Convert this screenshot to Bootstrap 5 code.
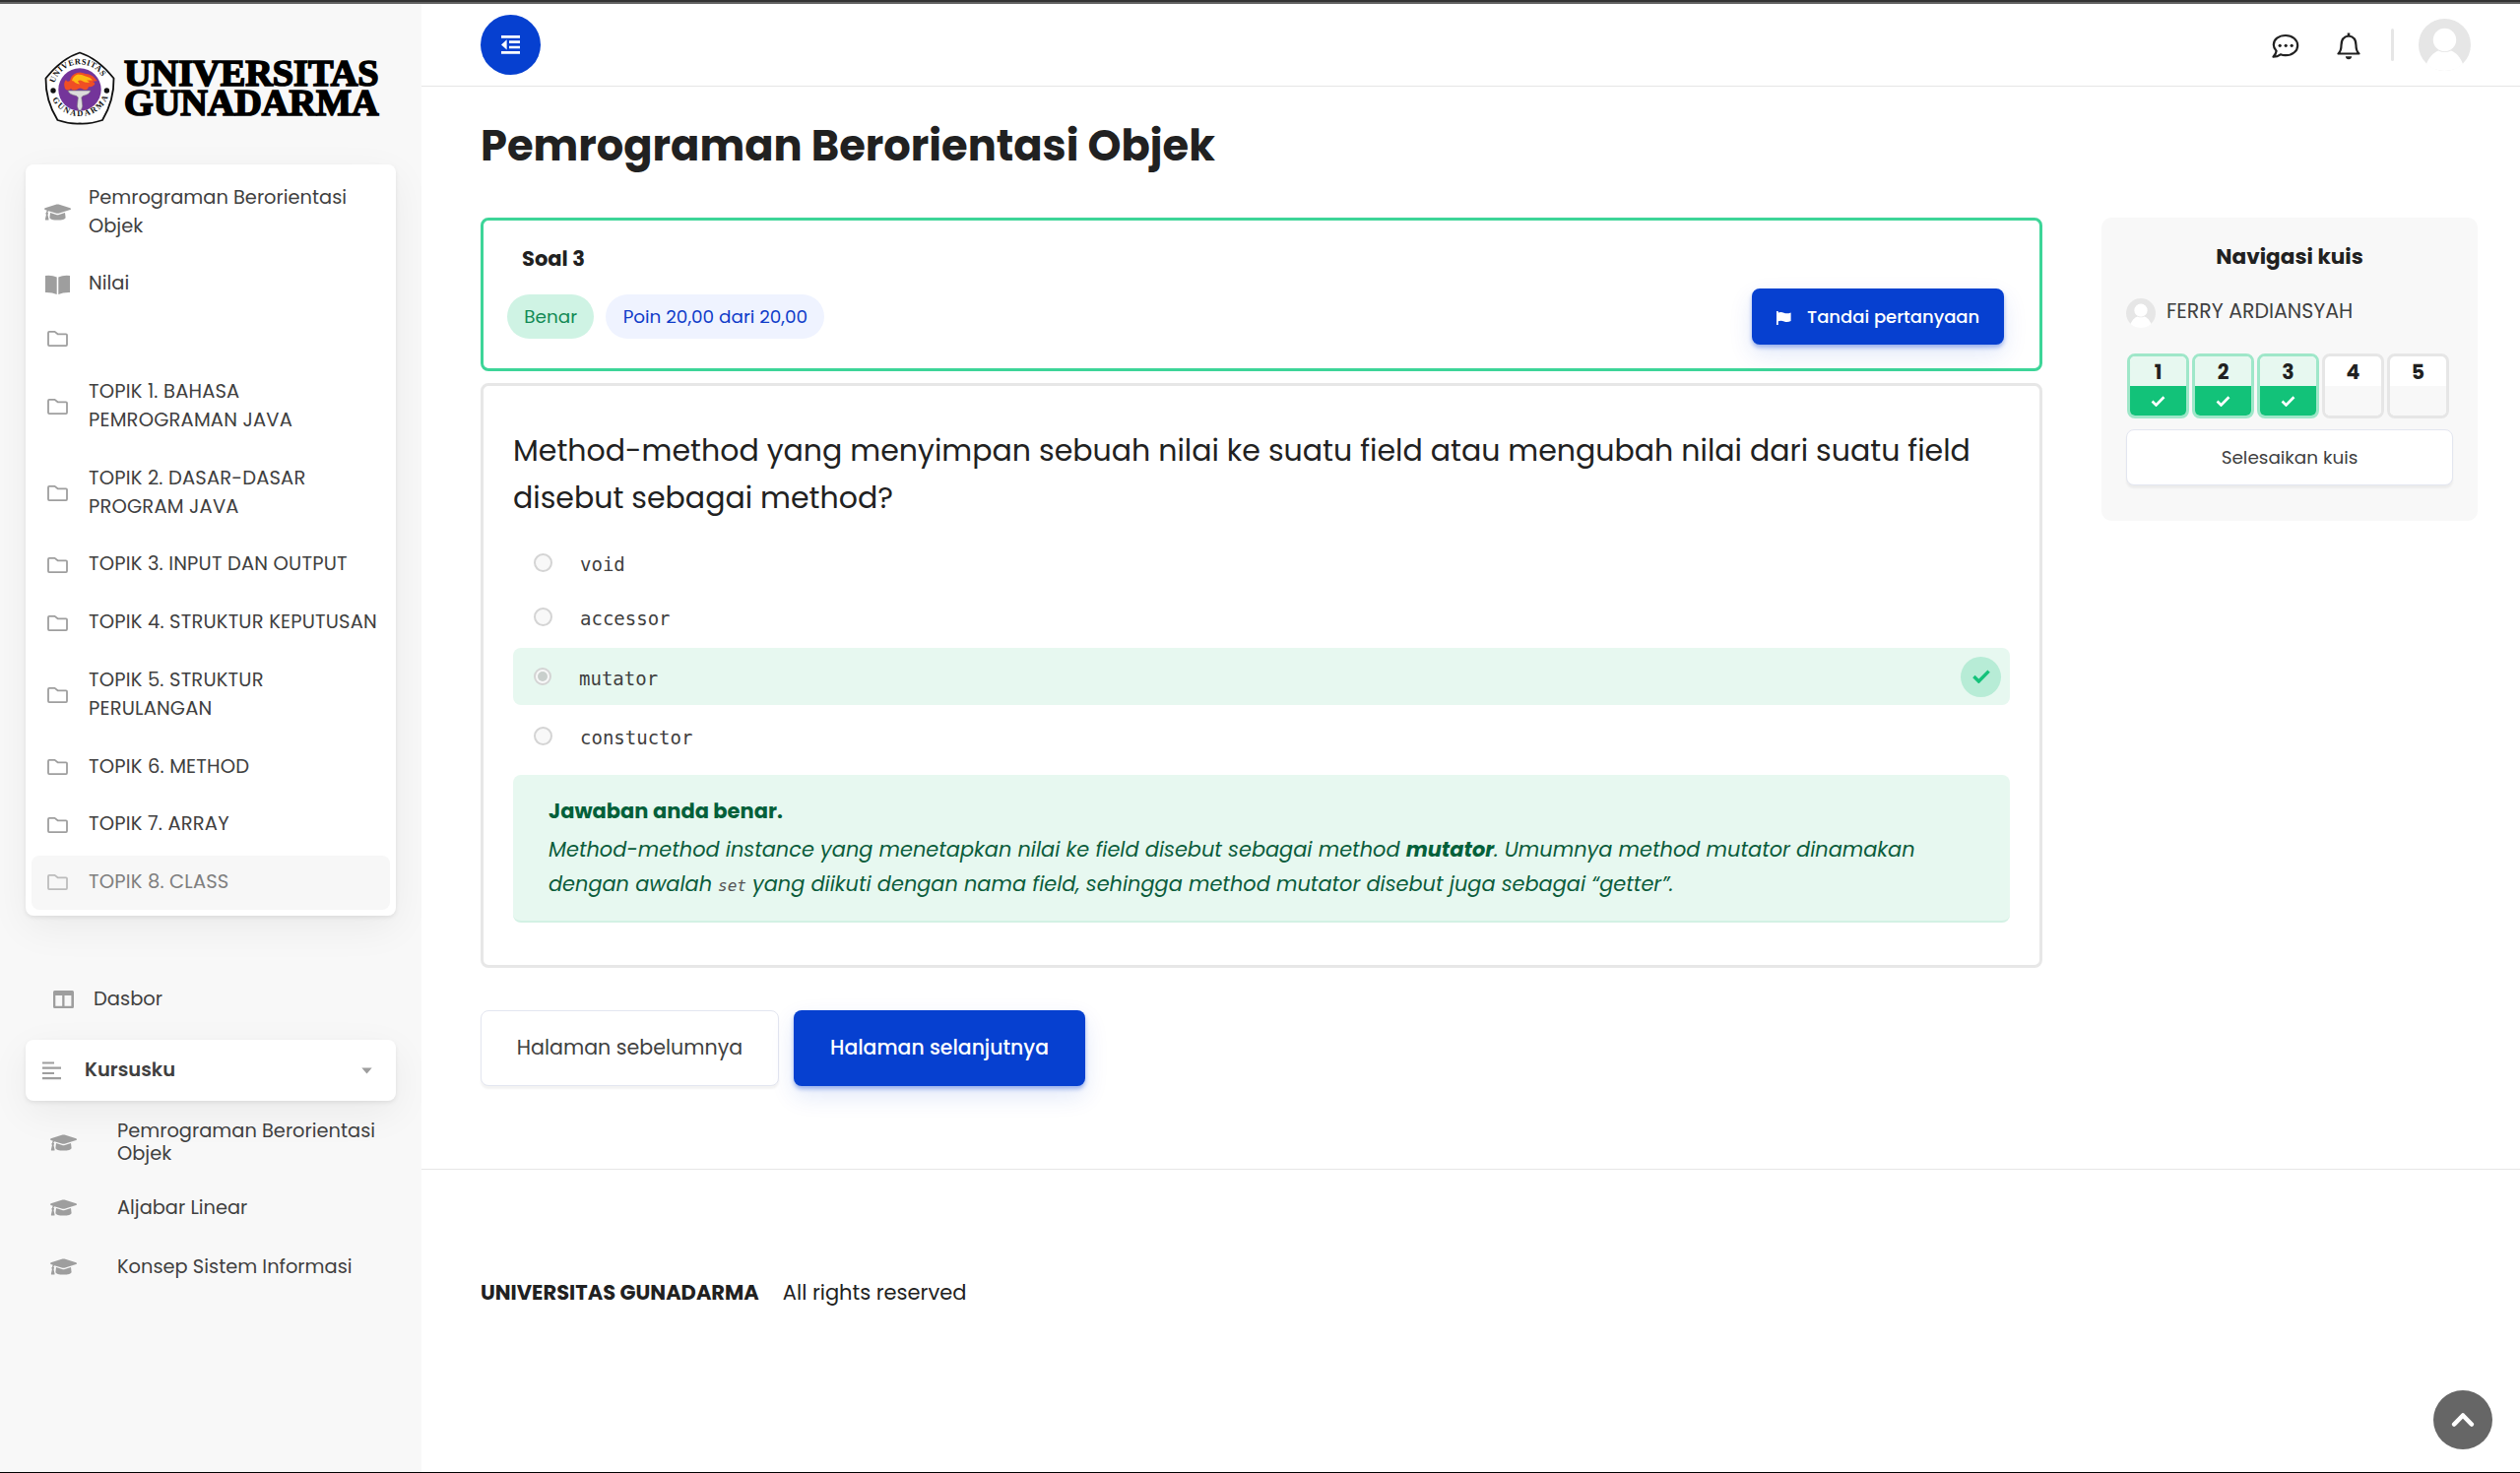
<!DOCTYPE html>
<html lang="id">
<head>
<meta charset="utf-8">
<meta name="viewport" content="width=device-width, initial-scale=1">
<title>Pemrograman Berorientasi Objek</title>
<link href="https://cdn.jsdelivr.net/npm/bootstrap@5.3.0/dist/css/bootstrap.min.css" rel="stylesheet">
<style>
  html, body { height: 100%; }
  body { font-family: Poppins, Inter, "Open Sans", sans-serif; font-size: 19.5px; line-height: 28.8px; color: #212121; background: #fff; overflow: hidden; }
  svg { display: block; flex: none; }
  .app { height: 1496px; border-top: 2px solid #333; border-bottom: 1px solid #000; }
  .app-inner { border-top: 2px solid #636363; }

  /* sidebar */
  .sidebar { width: 428px; background: #f8f8f8; padding: 0 26px; overflow: hidden; }
  .brand { margin: 46px -20px 39px 18px; }
  .panel { background: #fff; border-radius: 8px; box-shadow: 0 12px 40px rgba(0,0,0,.06), 0 2px 4px rgba(0,0,0,.08); }
  .course-nav { padding: 6.3px 6px 5.3px; gap: 2.8px; }
  .side-link { color: #404040; padding: 13.6px 6px 13.6px 12px; border-radius: 8px; text-decoration: none; }
  .side-link .ico { width: 28px; margin-right: 18px; color: #9e9e9e; }
  .side-link .ico svg { margin: auto; }
  .side-link .topic { letter-spacing: .18px; white-space: nowrap; }
  .side-link.blank { height: 48.2px; padding-top: 0; padding-bottom: 0; }
  .side-link.current { background: #f7f7f7; color: #7f7f7f; }
  .side-link.current .ico { color: #bcbcbc; }
  .side-link .plain, .my-list a { font-size: 19.4px; }
  .dash-link { color: #404040; text-decoration: none; margin-top: 70.8px; padding-left: 28px; height: 28.8px; }
  .my-courses { margin-top: 26.8px; height: 62px; padding: 0 24px 0 17px; color: #404040; }
  .my-list { margin-top: 18.8px; }
  .my-list a { color: #404040; text-decoration: none; line-height: 23.3px; padding-left: 25px; margin-bottom: 36.7px; }
  .my-list a:first-child { margin-bottom: 31.4px; }
  .my-list svg, .dash-link svg, .my-courses svg { color: #9e9e9e; }
  .my-list svg { margin-right: 41px; }

  /* top bar */
  .topbar { height: 84px; border-bottom: 1px solid #e6e6e6; padding: 0 50px 0 60px; }
  .toggle-btn { width: 61px; height: 61px; background: #0640d0; }
  .chat { margin-top: 3px; }
  .bell { margin: 3px 31px 0 38px; }
  .vr-line { width: 3px; height: 33px; background: #e6e6e6; border-radius: 2px; }
  .face { margin-left: 25px; }

  /* question */
  .content { padding: 0 42px 0 60px; }
  .page-title { font-size: 43.2px; line-height: 60px; font-weight: 700; margin: 30px 0 0; }
  .work { margin-top: 43px; gap: 60px; }
  .quiz { width: 1586px; }
  .info-box { border: 3px solid #3dd598; border-radius: 8px; height: 156px; padding: 24px 36px 0 24px; }
  .info-box .no { font-size: 21px; font-weight: 700; padding-left: 15px; line-height: 30px; }
  .pills { gap: 12px; margin-top: 21px; }
  .pill { height: 45px; border-radius: 22.5px; font-size: 18.4px; padding: 0 17.3px; line-height: 46px; white-space: nowrap; }
  .pill-ok { background: #cff3e4; color: #128a55; }
  .pill-pt { background: #eff3ff; color: #0f3cc9; }
  .btn-blue, .btn-blue:hover { background: #0640d0; color: #fff; font-weight: 500; border: 0; border-radius: 8px; box-shadow: 0 3px 4px rgba(6,64,208,.35), 0 10px 24px rgba(6,64,208,.12); }
  .btn-plain { background: #fff; color: #404040; border: 1px solid #e3e6f0; border-radius: 8px; box-shadow: 0 3px 2px rgba(0,0,0,.05); }
  .flag-btn { width: 256px; height: 57px; font-size: 18px; margin-bottom: 24px; padding: 0 0 0 25px; gap: 16px; white-space: nowrap; }
  .flag-btn svg { margin-top: 2px; }
  .question { border: 3px solid #e7e7e7; border-radius: 8px; margin-top: 12px; height: 594px; padding: 42px 30px 0; }
  .qtext { font-size: 30px; line-height: 48px; margin-bottom: 13.5px; }
  .option-row { padding-left: 21px; font: 19px/28px "DejaVu Sans Mono", monospace; color: #404040; height: 55.5px; }
  .option-row .lbl { padding-top: 3px; }
  .option-row.chosen { background: #e7f8f0; border-radius: 8px; height: 58px; padding-right: 9px; margin: 3.5px 0; }
  .dot { width: 19px; height: 19px; border: 2px solid #d4d4d4; border-radius: 50%; background: #f8f8f8; margin-right: 28px; }
  .chosen .dot { width: 18px; height: 18px; padding: 2px; }
  .chosen .dot::after { content: ""; display: block; width: 10px; height: 10px; border-radius: 50%; background: #c9cfcc; }
  .tick-badge { width: 41px; height: 41px; background: #b7ecd6; }
  .feedback { background: #e7f8f0; border-bottom: 2px solid #d3f1e4; border-radius: 8px; margin-top: 12px; height: 150px; padding: 20px 36px 0; font-size: 20.87px; line-height: 34.4px; color: #0b5c3b; white-space: nowrap; }
  .feedback .head { font-size: 21px; font-weight: 700; color: #04603a; line-height: 33px; margin-bottom: 6.4px; }
  .feedback b { color: #04603a; }
  .feedback .setcode { font: italic 16px "DejaVu Sans Mono", monospace; color: #555; margin: 0 6px; }
  .pager { margin-top: 43px; gap: 15px; }
  .pager .btn { height: 77px; padding: 0; }
  .pager .prev { width: 303px; font-size: 20.6px; }
  .pager .next { width: 296px; font-size: 20.4px; }

  /* quiz navigation */
  .quiz-nav { width: 382px; height: 308px; background: #f8f8f8; border-radius: 10px; padding: 24.5px 25px 0; }
  .quiz-nav .hd { font-size: 21.6px; font-weight: 700; line-height: 30px; }
  .user { margin-top: 27.5px; height: 30px; color: #404040; font-size: 20.5px; gap: 11px; }
  .user span { margin-top: -4px; }
  .cells { gap: 3px; margin: 26px 0 0 1px; }
  .cell { width: 63px; height: 66px; border: 3px solid #e6e6e6; border-radius: 8px; overflow: hidden; background: #fff; font-size: 20.5px; font-weight: 700; text-align: center; }
  .cell .st { height: 30px; background: #f8f8f8; }
  .cell .num { height: 30px; line-height: 32px; }
  .cell.ok { border-color: #9fe7c9; }
  .cell.ok .num { background: #e7f8f0; }
  .cell.ok .st { background: #12c279; }
  .finish { width: 332px; height: 57px; font-size: 18.4px; margin-top: 11px; }

  .site-footer { border-top: 1px solid #e6e6e6; margin-top: 84px; padding: 110.5px 60px 0; font-size: 21px; gap: 24px; }
  .to-top { position: absolute; right: 28px; bottom: 23px; width: 60px; height: 60px; background: #666; }
</style>
</head>
<body>
<svg width="0" height="0" class="position-absolute">
  <defs>
    <symbol id="cap" viewBox="0 32 640 448"><path fill="currentColor" d="M622.34 153.2L343.4 67.5c-15.2-4.67-31.6-4.67-46.79 0L17.66 153.2c-23.54 7.23-23.54 38.36 0 45.59l48.63 14.94c-10.67 13.19-17.23 29.28-17.88 46.9C38.78 266.15 32 276.11 32 288c0 10.78 5.68 19.85 13.86 25.65L20.33 428.53C18.11 438.52 25.71 448 35.94 448h56.11c10.24 0 17.84-9.48 15.62-19.47L82.14 313.65C90.32 307.85 96 298.78 96 288c0-11.57-6.47-21.25-15.66-26.87.76-15.02 8.44-28.3 20.69-36.72L296.6 284.5c9.06 2.78 26.44 6.25 46.79 0l278.95-85.7c23.55-7.24 23.55-38.36 0-45.6zM352.79 315.09c-28.53 8.76-52.84 3.92-65.59 0l-145.02-44.55L128 384c0 35.35 85.96 64 192 64s192-28.65 192-64l-14.18-113.47-145.03 44.56z"/></symbol>
    <symbol id="folder" viewBox="0 0 21 16"><path fill="none" stroke="currentColor" stroke-width="1.8" stroke-linejoin="round" d="M1 1.9Q1 .9 2 .9h5.6l3 2.4H19q1 0 1 1V14q0 1.100-1 1.100H2Q1 15.100 1 14z"/></symbol>
    <symbol id="check" viewBox="0 0 18 14"><path fill="none" stroke="currentColor" stroke-width="3.4" d="M1.4 7l5 5L16.6 1.6"/></symbol>
    <symbol id="person" viewBox="0 0 53 53"><circle cx="26.5" cy="26.5" r="26.5" fill="#e6e6e6"/><circle cx="26.5" cy="21.5" r="11.7" fill="#fff"/><path fill="#fff" d="M8 46c2-6 7.5-12 12-13.5q6.5 3 13 0C38 34 43 40 45 46q-7 7-18.500 7T8 46z"/></symbol>
  </defs>
</svg>

<div class="app">
<div class="app-inner d-flex h-100 position-relative">
  <aside class="sidebar flex-shrink-0">
    <a class="brand d-block" href="#" aria-label="Universitas Gunadarma">
      <svg width="370" height="78" viewBox="44 50 370 78">
        <path d="M81 53.500Q99 59 115.500 79.500Q116 102 104 122Q92 126 81 125.500Q70 126 58.500 122Q46 102 46.500 79.500Q63 59 81 53.500z" fill="#fff" stroke="#111" stroke-width="1.800"/>
        <circle cx="81" cy="91" r="21.700" fill="#74359a"/>
        <g fill="#111"><circle cx="54" cy="92" r="2.700"/><circle cx="108.400" cy="92" r="2.700"/></g>
        <path id="arcTop" d="M55.500 84.500A26.500 26.500 0 0 1 106.500 84.500" fill="none"/>
        <path id="arcLow" d="M52 98A31 31 0 0 0 110 98" fill="none"/>
        <g font-family="Liberation Serif, serif" font-weight="700" font-size="8.500" fill="#111">
          <text textLength="61"><textPath href="#arcTop">UNIVERSITAS</textPath></text>
          <text textLength="71"><textPath href="#arcLow" startOffset="3">GUNADARMA</textPath></text>
        </g>
        <path d="M66 90q-2-6 1-9q1 3 4 1q1-6 7-8q4-1.500 9 1q5 0 9 4q2 3 3 3l-5 1q3 1 2 3q-3 3-6 2q-1 4-5 3q-4-3-7 0q-4 2-6-1q-3 3-6 0z" fill="#f04e24"/>
        <path d="M73 82q1-5 6-6.500q4 0 8 2q5 1 7 4l-6 0l3 2q-4 1-7-1q-3-2-5 0l2 3q-5-1-6-3z" fill="#fdb913"/>
        <path d="M69 92h23q-1 4-8 5.500l-1.200 1.500l1 9-1.500 4h-2.500l-1.500-4 1-9-1.500-1.500Q70 96 69 92z" fill="#dcdcdc" stroke="#77707c" stroke-width=".6"/>
        <g font-family="Liberation Serif, serif" font-weight="700" font-size="37.500" fill="#000" stroke="#000" stroke-width="1.700">
          <text x="126" y="86.500" textLength="258.500" lengthAdjust="spacingAndGlyphs">UNIVERSITAS</text>
          <text x="126" y="117.200" textLength="258.500" lengthAdjust="spacingAndGlyphs">GUNADARMA</text>
        </g>
      </svg>
    </a>

    <nav class="panel course-nav d-flex flex-column">
      <a class="side-link d-flex align-items-center" href="#"><span class="ico"><svg width="27" height="19"><use href="#cap"/></svg></span><span class="plain">Pemrograman Berorientasi<br>Objek</span></a>
      <a class="side-link d-flex align-items-center" href="#"><span class="ico"><svg width="25" height="20" viewBox="0 0 25 20"><path fill="currentColor" d="M0 1q7-.8 11.700 1.600V20Q7 17.800 0 18zM25 1q-7-.8-11.700 1.600V20Q18 17.800 25 18z"/></svg></span><span>Nilai</span></a>
      <a class="side-link d-flex align-items-center blank" href="#" aria-label="Umum"><span class="ico"><svg width="21" height="16"><use href="#folder"/></svg></span></a>
      <a class="side-link d-flex align-items-center" href="#"><span class="ico"><svg width="21" height="16"><use href="#folder"/></svg></span><span class="topic">TOPIK 1. BAHASA<br>PEMROGRAMAN JAVA</span></a>
      <a class="side-link d-flex align-items-center" href="#"><span class="ico"><svg width="21" height="16"><use href="#folder"/></svg></span><span class="topic">TOPIK 2. DASAR-DASAR<br>PROGRAM JAVA</span></a>
      <a class="side-link d-flex align-items-center" href="#"><span class="ico"><svg width="21" height="16"><use href="#folder"/></svg></span><span class="topic">TOPIK 3. INPUT DAN OUTPUT</span></a>
      <a class="side-link d-flex align-items-center" href="#"><span class="ico"><svg width="21" height="16"><use href="#folder"/></svg></span><span class="topic">TOPIK 4. STRUKTUR KEPUTUSAN</span></a>
      <a class="side-link d-flex align-items-center" href="#"><span class="ico"><svg width="21" height="16"><use href="#folder"/></svg></span><span class="topic">TOPIK 5. STRUKTUR<br>PERULANGAN</span></a>
      <a class="side-link d-flex align-items-center" href="#"><span class="ico"><svg width="21" height="16"><use href="#folder"/></svg></span><span class="topic">TOPIK 6. METHOD</span></a>
      <a class="side-link d-flex align-items-center" href="#"><span class="ico"><svg width="21" height="16"><use href="#folder"/></svg></span><span class="topic">TOPIK 7. ARRAY</span></a>
      <a class="side-link d-flex align-items-center current" href="#"><span class="ico"><svg width="21" height="16"><use href="#folder"/></svg></span><span class="topic">TOPIK 8. CLASS</span></a>
    </nav>

    <a class="dash-link d-flex align-items-center" href="#">
      <svg class="me-3" width="21" height="18" viewBox="0 0 21 18"><path fill="currentColor" fill-rule="evenodd" d="M1.500 0h18q1.500 0 1.500 1.500v15q0 1.500-1.500 1.500h-18Q0 18 0 16.500v-15Q0 0 1.500 0zM2.300 5v10.700h6.900V5zM11.500 5v10.700h6.900V5z"/></svg>
      <span class="ms-1">Dasbor</span>
    </a>
    <div class="panel my-courses d-flex align-items-center">
      <svg width="19" height="19" viewBox="0 0 19 19"><path stroke="currentColor" stroke-width="2.200" d="M0 1.500h12M0 6.700h19M0 12h12M0 17.200h19"/></svg>
      <span class="fw-semibold ms-4">Kursusku</span>
      <svg class="ms-auto" width="11" height="7" viewBox="0 0 11 7"><path fill="currentColor" d="M.3.500h10.400L5.500 6.500z"/></svg>
    </div>
    <div class="my-list">
      <a class="d-flex align-items-center" href="#"><svg width="27" height="19"><use href="#cap"/></svg><span class="text-nowrap">Pemrograman Berorientasi<br>Objek</span></a>
      <a class="d-flex align-items-center" href="#"><svg width="27" height="19"><use href="#cap"/></svg><span>Aljabar Linear</span></a>
      <a class="d-flex align-items-center" href="#"><svg width="27" height="19"><use href="#cap"/></svg><span>Konsep Sistem Informasi</span></a>
    </div>
  </aside>

  <div class="flex-grow-1">
    <header class="topbar d-flex align-items-center">
      <button class="toggle-btn btn rounded-circle p-0 d-flex justify-content-center align-items-center border-0" aria-label="Menu">
        <svg width="19" height="19" viewBox="0 0 19 19"><path stroke="#fff" stroke-width="2.700" d="M0 1.400h19M8 6.700h11M8 12h11M0 17.400h19"/><path fill="#fff" d="M0 9.400L5.600 4.300v10.200z"/></svg>
      </button>
      <div class="ms-auto d-flex align-items-center">
        <svg class="chat" width="28" height="26" viewBox="0 0 28 26" fill="none" stroke="#212121" stroke-width="2.200"><path stroke-linejoin="round" d="M14 2C7 2 1.800 6 1.800 11.500c0 2.600 1.200 4.600 2.800 6.300Q4 21.500 1.500 23.700q4 0 7.300-2.400 2.600 1 5.200.9c7 0 12.200-4.500 12.200-10S21 2 14 2z"/><g fill="#212121" stroke="none"><circle cx="8.200" cy="12.300" r="1.600"/><circle cx="14.200" cy="12.300" r="1.600"/><circle cx="20.200" cy="12.300" r="1.600"/></g></svg>
        <svg class="bell" width="24" height="28" viewBox="0 0 24 28"><path fill="none" stroke="#212121" stroke-width="2.200" stroke-linejoin="round" d="M1.500 21.500h21q-3-2.800-3-8.500 0-8.700-7.500-9.500-7.500.8-7.500 9.500 0 5.700-3 8.500z"/><path fill="#212121" d="M10.700.5h2.600V4h-2.600zM8.800 24.300h6.400q-.4 3-3.200 3t-3.200-3z"/></svg>
        <span class="vr-line"></span>
        <svg class="face" width="53" height="53"><use href="#person"/></svg>
      </div>
    </header>

    <main class="content">
      <h1 class="page-title">Pemrograman Berorientasi Objek</h1>
      <div class="work d-flex align-items-start">
        <div class="quiz">
          <section class="info-box d-flex justify-content-between">
            <div>
              <div class="no">Soal 3</div>
              <div class="pills d-flex"><span class="pill pill-ok">Benar</span><span class="pill pill-pt">Poin 20,00 dari 20,00</span></div>
            </div>
            <button class="btn btn-blue flag-btn align-self-end d-flex align-items-center">
              <svg width="15" height="14" viewBox="0 0 15 14"><path fill="#fff" d="M0 0h1.700v1.500Q4.500.3 7.500 1.700T14.600 1.500v8.600Q11 11.700 7.800 10.500T1.700 10.300V14H0z"/></svg>
              <span>Tandai pertanyaan</span>
            </button>
          </section>

          <section class="question">
            <div class="qtext">Method-method yang menyimpan sebuah nilai ke suatu field atau mengubah nilai dari suatu field<br>disebut sebagai method?</div>
            <div class="option-row d-flex align-items-center"><span class="dot"></span><span class="lbl">void</span></div>
            <div class="option-row d-flex align-items-center"><span class="dot"></span><span class="lbl">accessor</span></div>
            <div class="option-row chosen d-flex align-items-center"><span class="dot"></span><span class="lbl">mutator</span>
              <span class="tick-badge rounded-circle ms-auto d-flex align-items-center justify-content-center"><svg width="18" height="14" color="#14c27a"><use href="#check"/></svg></span></div>
            <div class="option-row d-flex align-items-center"><span class="dot"></span><span class="lbl">constuctor</span></div>
            <div class="feedback">
              <div class="head">Jawaban anda benar.</div>
              <div class="fst-italic">Method-method instance yang menetapkan nilai ke field disebut sebagai method <b class="fw-bold">mutator</b>. Umumnya method mutator dinamakan<br>dengan awalah<span class="setcode">set</span>yang diikuti dengan nama field, sehingga method mutator disebut juga sebagai “getter”.</div>
            </div>
          </section>

          <div class="pager d-flex">
            <button class="btn btn-plain prev">Halaman sebelumnya</button>
            <button class="btn btn-blue next">Halaman selanjutnya</button>
          </div>
        </div>

        <aside class="quiz-nav">
          <div class="hd text-center">Navigasi kuis</div>
          <div class="user d-flex align-items-center"><svg width="30" height="30"><use href="#person"/></svg><span>FERRY ARDIANSYAH</span></div>
          <div class="cells d-flex">
            <div class="cell ok"><div class="num">1</div><div class="st d-flex align-items-center justify-content-center"><svg width="15" height="11" color="#fff"><use href="#check"/></svg></div></div>
            <div class="cell ok"><div class="num">2</div><div class="st d-flex align-items-center justify-content-center"><svg width="15" height="11" color="#fff"><use href="#check"/></svg></div></div>
            <div class="cell ok"><div class="num">3</div><div class="st d-flex align-items-center justify-content-center"><svg width="15" height="11" color="#fff"><use href="#check"/></svg></div></div>
            <div class="cell"><div class="num">4</div><div class="st"></div></div>
            <div class="cell"><div class="num">5</div><div class="st"></div></div>
          </div>
          <button class="btn btn-plain finish p-0">Selesaikan kuis</button>
        </aside>
      </div>
    </main>
    <footer class="site-footer d-flex"><strong class="fw-bold">UNIVERSITAS GUNADARMA</strong><span>All rights reserved</span></footer>
  </div>

  <button class="to-top btn rounded-circle p-0 border-0 d-flex align-items-center justify-content-center" aria-label="Ke atas"><svg width="24" height="16" viewBox="0 0 24 16"><path fill="none" stroke="#fff" stroke-width="4.600" stroke-linecap="round" stroke-linejoin="round" d="M3.200 12.500L12 3.500l8.800 9"/></svg></button>
</div>
</div>
<script src="https://cdn.jsdelivr.net/npm/bootstrap@5.3.0/dist/js/bootstrap.bundle.min.js"></script>
</body>
</html>
